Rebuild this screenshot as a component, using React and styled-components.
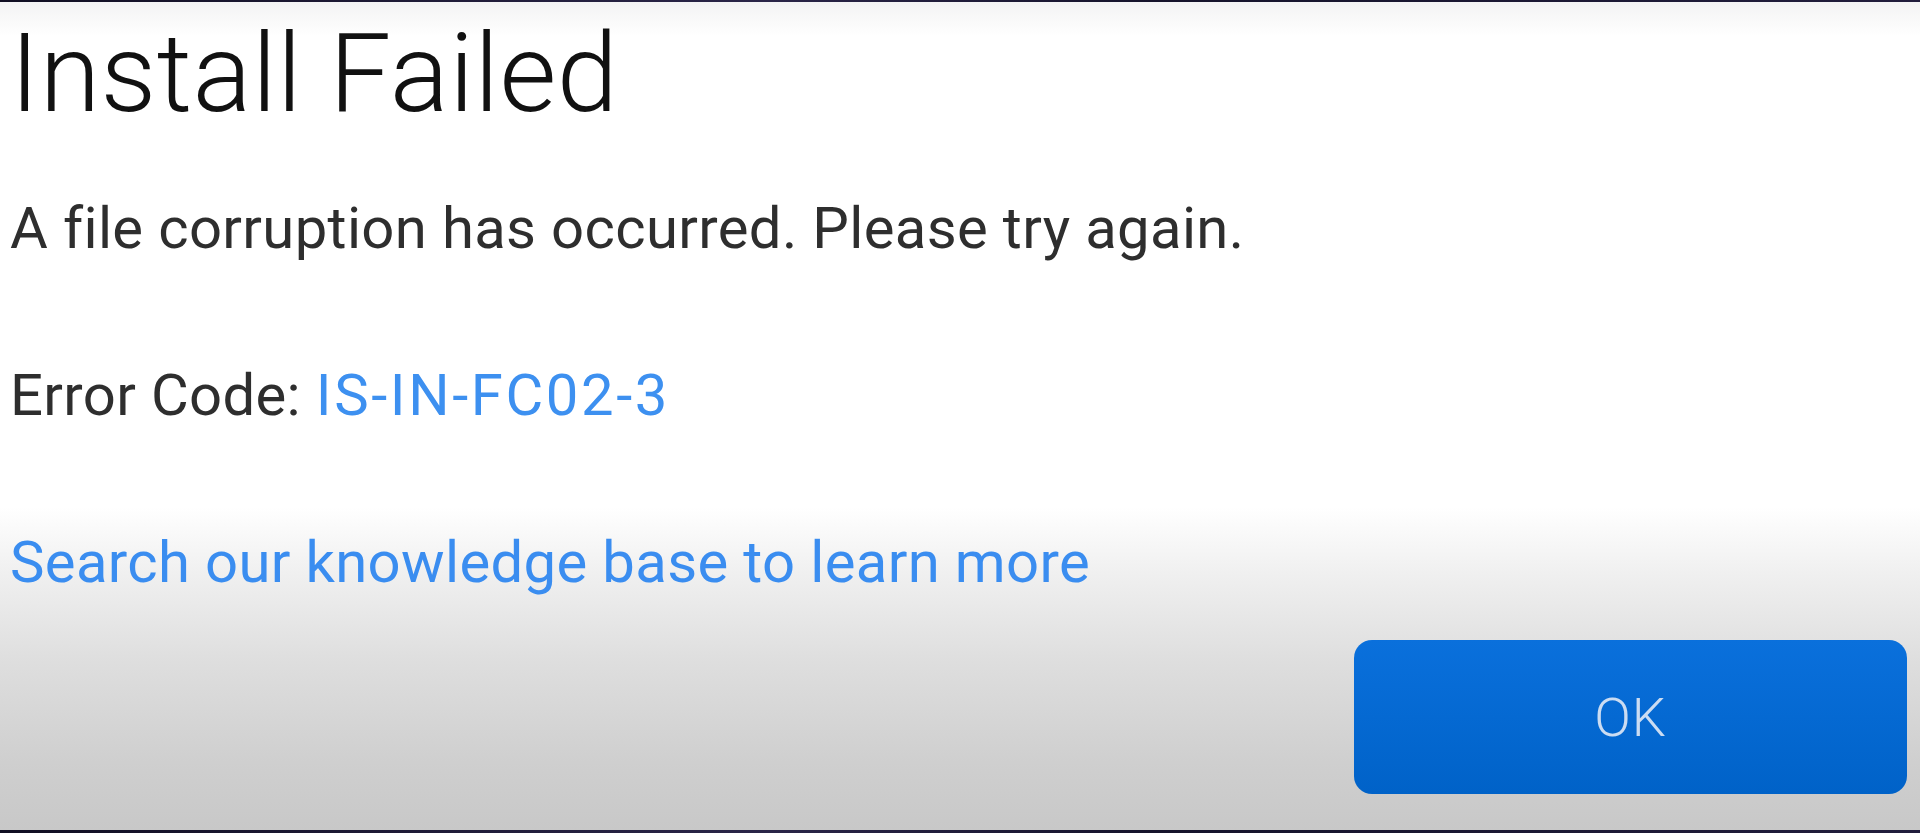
import styled, { createGlobalStyle } from "styled-components";

const GlobalStyle = createGlobalStyle`
  html, body {
    margin: 0;
    padding: 0;
    background: #14122a;
  }
  * {
    box-sizing: border-box;
  }
`;

const Page = styled.div`
  display: flex;
  flex-direction: column;
  width: 1920px;
  height: 833px;
  overflow: hidden;
`;

const Edge = styled.div`
  flex: 0 0 ${(p) => p.size}px;
  background: linear-gradient(to right, #100e22, #2a2548 40%, #15132b 60%, #211d3c);
`;

const Dialog = styled.section`
  flex: 1;
  display: flex;
  flex-direction: column;
  padding: 0 13px 0 10px;
  font-family: Roboto, "Liberation Sans", Arial, sans-serif;
  background: linear-gradient(
    to bottom,
    #f3f3f4 0px,
    #fafafa 20px,
    #ffffff 34px,
    #ffffff 505px,
    #f0f0f0 570px,
    #dedede 660px,
    #cfcfcf 760px,
    #c8c8c8 100%
  );
`;

const Title = styled.h1`
  margin: 17px 0 0;
  font-size: 110px;
  line-height: 110px;
  font-weight: 300;
  color: #111;
  letter-spacing: 0.4px;
`;

const Line = styled.p`
  margin: ${(p) => p.gap}px 0 0;
  font-size: 58px;
  line-height: 58px;
  font-weight: 400;
  letter-spacing: 0.35px;
  color: ${(p) => (p.link ? "#3a8df0" : "#2e2e2e")};
`;

const Code = styled.span`
  color: #3d90f0;
  letter-spacing: 2.6px;
`;

const Footer = styled.div`
  display: flex;
  justify-content: flex-end;
  margin-top: 49px;
`;

const OkButton = styled.button`
  width: 553px;
  height: 154px;
  border: none;
  border-radius: 18px;
  background: linear-gradient(to bottom, #0a70dc, #0062c8);
  color: #cbdcf2;
  font-family: Roboto, "Liberation Sans", Arial, sans-serif;
  font-size: 54px;
  font-weight: 300;
  letter-spacing: 1px;
  cursor: pointer;
`;

export default function App() {
  return (
    <>
      <GlobalStyle />
      <Page>
        <Edge size={2} />
        <Dialog>
          <Title>Install Failed</Title>
          <Line gap={70}>A file corruption has occurred. Please try again.</Line>
          <Line gap={109}>
            Error Code: <Code>IS-IN-FC02-3</Code>
          </Line>
          <Line gap={109} link>
            Search our knowledge base to learn more
          </Line>
          <Footer>
            <OkButton>OK</OkButton>
          </Footer>
        </Dialog>
        <Edge size={3} />
      </Page>
    </>
  );
}
